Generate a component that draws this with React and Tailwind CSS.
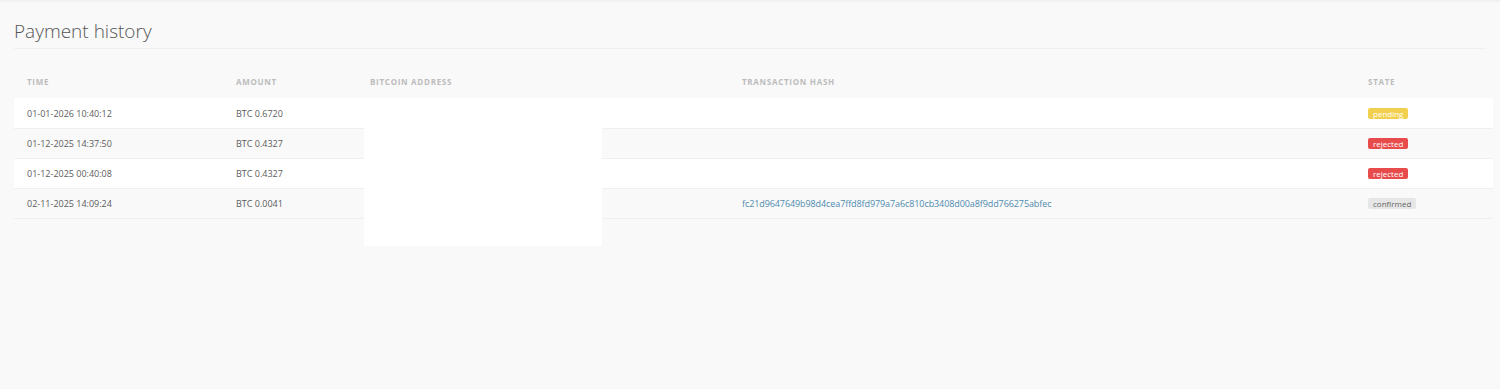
const payments = [
  { time: '01-01-2026 10:40:12', amount: 'BTC 0.6720', hash: '', state: 'pending' },
  { time: '01-12-2025 14:37:50', amount: 'BTC 0.4327', hash: '', state: 'rejected' },
  { time: '01-12-2025 00:40:08', amount: 'BTC 0.4327', hash: '', state: 'rejected' },
  {
    time: '02-11-2025 14:09:24',
    amount: 'BTC 0.0041',
    hash: 'fc21d9647649b98d4cea7ffd8fd979a7a6c810cb3408d00a8f9dd766275abfec',
    state: 'confirmed',
  },
];

const badgeClass = {
  pending: 'bg-[#f2d04f] text-white',
  rejected: 'bg-[#e84b4b] text-white',
  confirmed: 'bg-[#e6e6e6] text-[#666]',
};

function StateBadge({ state }) {
  return (
    <span className={`inline-block rounded-[2px] px-[5px] text-[8px] leading-[11px] ${badgeClass[state]}`}>
      {state}
    </span>
  );
}

export default function App() {
  return (
    <div className="relative h-[389px] w-full overflow-hidden border-t-2 border-[#f1f1f1] bg-[#f9f9f9] font-['Open_Sans',sans-serif]">
      {/* Header */}
      <div className="mx-[14px] border-b border-[#efefef] pb-[4px] pt-[16px]">
        <h1 className="text-[19px] font-light leading-[26px] text-[#555]">Payment history</h1>
      </div>

      {/* Table */}
      <table className="ml-[14px] mt-[17px] w-[1479px] table-fixed border-collapse text-left">
        <colgroup>
          <col className="w-[209px]" />
          <col className="w-[134px]" />
          <col className="w-[372px]" />
          <col className="w-[626px]" />
          <col className="w-[138px]" />
        </colgroup>
        <thead>
          <tr className="h-[32px] text-[8px] font-bold uppercase tracking-[0.09em] text-[#bcbcbc]">
            <th className="pl-[13px] font-bold">Time</th>
            <th className="pl-[13px] font-bold">Amount</th>
            <th className="pl-[13px] font-bold">Bitcoin address</th>
            <th className="pl-[13px] font-bold">Transaction hash</th>
            <th className="pl-[13px] font-bold">State</th>
          </tr>
        </thead>
        <tbody className="text-[9px] text-[#5c5c5c]">
          {payments.map((p, i) => (
            <tr
              key={p.time}
              className={`h-[30px] border-b border-[#efefef] ${i % 2 === 0 ? 'bg-white' : 'bg-[#f9f9f9]'}`}
            >
              <td className="pl-[13px] pt-[1px]">{p.time}</td>
              <td className="pl-[13px] pt-[1px]">{p.amount}</td>
              <td className="pl-[13px] pt-[1px]"></td>
              <td className="pl-[13px] pt-[1px] tracking-[-0.01em] text-[#4e8bb0]">{p.hash}</td>
              <td className="pl-[13px] pt-[1px]">
                <StateBadge state={p.state} />
              </td>
            </tr>
          ))}
        </tbody>
      </table>

      {/* redacted address block */}
      <div className="absolute left-[364px] top-[120px] h-[124px] w-[238px] bg-white" />
    </div>
  );
}
